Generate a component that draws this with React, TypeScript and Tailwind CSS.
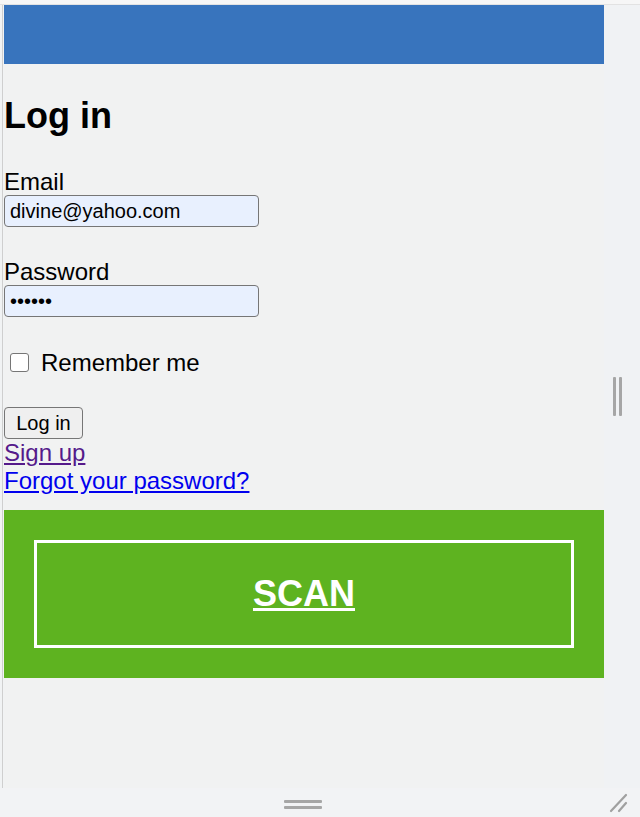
import React from 'react';

const App: React.FC = () => {
  return (
    <div className="w-[640px] h-[817px] bg-[#f1f3f4] flex flex-col overflow-hidden font-['Liberation_Sans',Arial,sans-serif] text-black">
      {/* top edge of the emulated viewport */}
      <div className="h-[5px] bg-[#f6f6f6] border-b border-[#e2e2e2] shrink-0" />

      <div className="flex flex-1 min-h-0">
        <div className="w-[2px] shrink-0" />
        <div className="w-px bg-[#cfcfcf] shrink-0" />
        <div className="w-px shrink-0" />

        {/* page */}
        <div className="w-[600px] shrink-0 bg-[#f1f2f2] flex flex-col">
          <div className="h-[59px] bg-[#3874bd]" />

          <h1 className="mt-[31px] text-[36px] leading-[41px] font-bold">Log in</h1>

          <label className="mt-[32px] text-[24px] leading-[27px]">Email</label>
          <input
            type="email"
            value="divine@yahoo.com"
            readOnly
            className="w-[255px] h-[32px] bg-[#e8f0fe] border border-[#767676] rounded-[4px] pl-[5px] text-[20px] outline-none"
          />

          <label className="mt-[31px] text-[24px] leading-[27px]">Password</label>
          <input
            type="password"
            value="secret"
            readOnly
            className="w-[255px] h-[32px] bg-[#e8f0fe] border border-[#767676] rounded-[4px] pl-[5px] text-[20px] outline-none"
          />

          <div className="mt-[31px] h-[28px] flex items-center">
            <span className="ml-[6px] w-[19px] h-[19px] bg-white border border-[#767676] rounded-[3px] shrink-0" />
            <span className="ml-[12px] text-[24px] leading-[27px]">Remember me</span>
          </div>

          <button className="mt-[31px] w-[79px] h-[32px] bg-[#efefef] border border-[#767676] rounded-[4px] text-[20px] leading-none">
            Log in
          </button>

          <a href="#" className="self-start text-[24px] leading-[27.6px] text-[#551a8b] underline">
            Sign up
          </a>
          <a href="#" className="self-start text-[24px] leading-[27.6px] text-[#0000ee] underline">
            Forgot your password?
          </a>

          <div className="mt-[16px] bg-[#5eb320] px-[30px] py-[30px]">
            <div className="h-[108px] border-[3px] border-white flex items-center justify-center">
              <a href="#" className="text-white text-[36px] font-bold underline decoration-[3px]">
                SCAN
              </a>
            </div>
          </div>
        </div>

        {/* right resize strip */}
        <div className="flex-1 bg-[#f0f2f4] flex items-center">
          <div className="ml-[9px] flex gap-[3px] h-[39px]">
            <div className="w-[3px] h-full bg-[#a6a6a6] rounded-[1px]" />
            <div className="w-[3px] h-full bg-[#a6a6a6] rounded-[1px]" />
          </div>
        </div>
      </div>

      {/* bottom resize strip */}
      <div className="h-[29px] shrink-0 bg-[#f2f3f5] relative flex">
        <div className="w-[284px] shrink-0" />
        <div className="mt-[12px] flex flex-col gap-[3px]">
          <div className="w-[38px] h-[3px] bg-[#a6a6a6] rounded-[1px]" />
          <div className="w-[38px] h-[3px] bg-[#a6a6a6] rounded-[1px]" />
        </div>
        <svg className="absolute left-[608px] top-[5px]" width="22" height="20" viewBox="0 0 22 20">
          <line x1="18" y1="2" x2="3" y2="18" stroke="#a0a0a0" strokeWidth="2.2" strokeLinecap="round" />
          <line x1="18" y1="10" x2="11" y2="18" stroke="#a0a0a0" strokeWidth="2.2" strokeLinecap="round" />
        </svg>
      </div>
    </div>
  );
};

export default App;
